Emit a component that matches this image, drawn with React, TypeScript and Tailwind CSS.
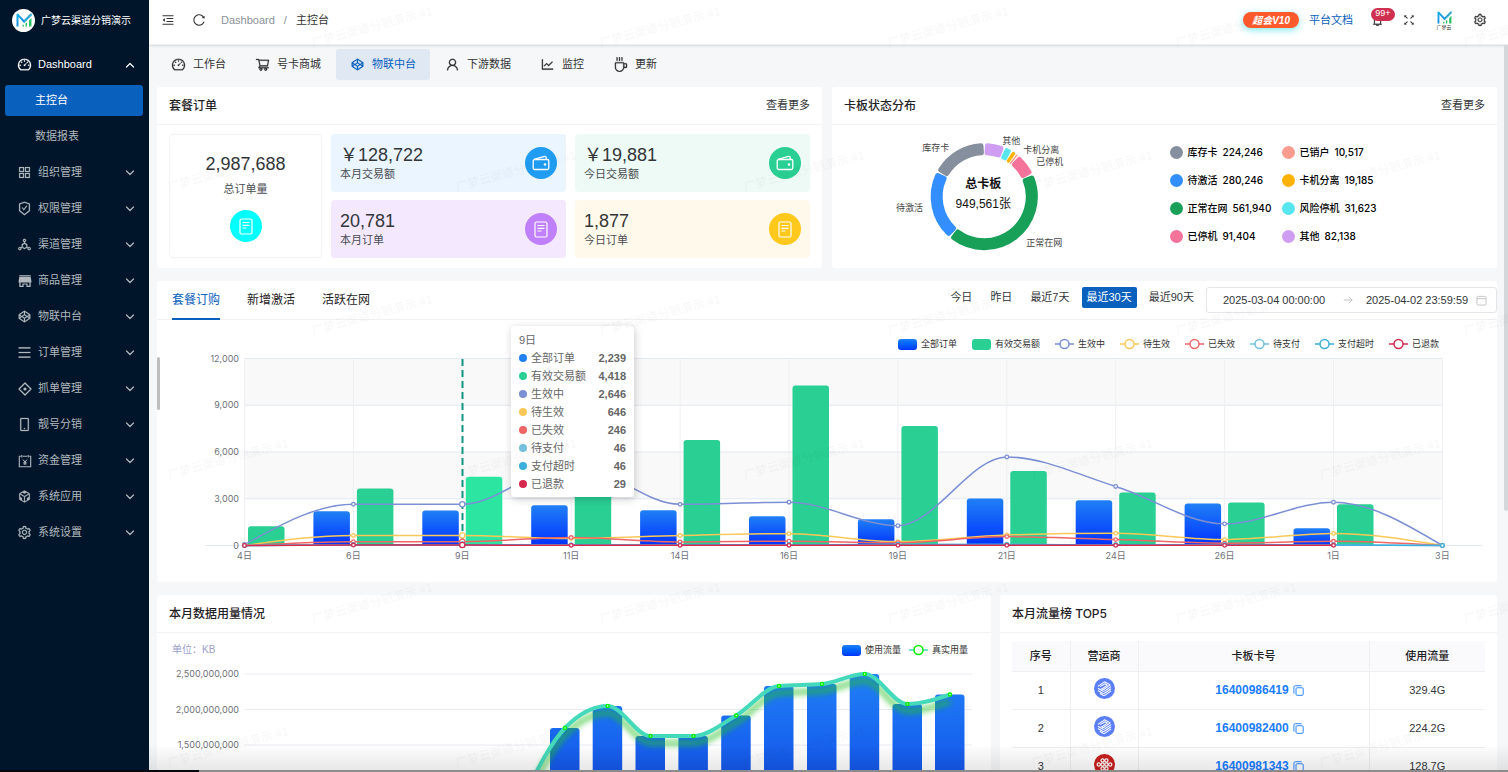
import { useId, type ReactNode } from "react";
import {
  AiOutlineAppstore,
  AiOutlineBell,
  AiOutlineCodeSandbox,
  AiOutlineCodepen,
  AiOutlineCoffee,
  AiOutlineDashboard,
  AiOutlineDeploymentUnit,
  AiOutlineFullscreen,
  AiOutlineLineChart,
  AiOutlineMenu,
  AiOutlineMenuFold,
  AiOutlineMobile,
  AiOutlineReload,
  AiOutlineSafetyCertificate,
  AiOutlineSetting,
  AiOutlineShoppingCart,
  AiOutlineUser,
} from "react-icons/ai";

type Point = [number, number];

/* ---------- icons ---------- */

function LogoMark({ className }: { className: string }) {
  const id = useId();
  return (
    <svg viewBox="0 0 32 28" className={className} aria-hidden="true">
      <defs>
        <linearGradient id={id} x1="0" y1="0" x2="1" y2="1">
          <stop offset="0" stopColor="#16b8f0" />
          <stop offset="1" stopColor="#1a5fd0" />
        </linearGradient>
      </defs>
      <path d="M1 27V2l3-1 12 13L29 1h2v4L16 20 5 8v19z" fill={`url(#${id})`} />
      <path d="M13 27v-4l3 1v3zM19 27v-6l3-2v8zM26 27V15l5-5v17z" fill="#2fc26b" />
      <path d="M16 16 31 1v4L16 20z" fill="#2fb8c8" />
    </svg>
  );
}

function Chevron({ up }: { up?: boolean }) {
  return (
    <svg viewBox="0 0 10 10" className="size-[10px]" fill="none" stroke="currentColor" strokeWidth="1.200" aria-hidden="true">
      <path d={up ? "M1.500 7 5 3.500 8.500 7" : "M1.500 3 5 6.500 8.500 3"} strokeLinecap="round" strokeLinejoin="round" />
    </svg>
  );
}

function ShopIcon() {
  return (
    <svg viewBox="0 0 14 14" className="size-[14px]" fill="currentColor" aria-hidden="true">
      <path d="M1.300 1h11.400v1.400H1.300z" opacity="0.800" />
      <path d="M1.300 2.800h11.400l.7 4.400v1.300H.6V7.200z" />
      <path d="M1.300 8h1.300v3.700h1.800V9.400h5.200v2.300h1.800V8h1.300v5H8.400v-2.400H5.600V13H1.300z" />
    </svg>
  );
}

function TargetIcon() {
  return (
    <svg viewBox="0 0 14 14" className="size-[14px]" fill="none" stroke="currentColor" strokeWidth="1.300" aria-hidden="true">
      <path d="M3.800 4.200 7 1l3.200 3.200M11 5l2 2-3.200 3.200M9 11l-2 2-3.200-3.200M3 9 1 7l2-2" strokeLinecap="round" strokeLinejoin="round" />
      <circle cx="7" cy="7" r="1.600" fill="currentColor" stroke="none" />
    </svg>
  );
}

function FundIcon() {
  return (
    <svg viewBox="0 0 14 14" className="size-[14px]" fill="none" stroke="currentColor" strokeWidth="1.100" aria-hidden="true">
      <path d="M2.800 2.300H1.300v10.400h11.400V2.300h-1.500M4.800 2.300h4.400M3.800 1v2.600M10.200 1v2.600" />
      <path d="M5 5.500 7 8l2-2.500M7 8v3M5.400 8.300h3.200M5.400 9.800h3.200" strokeWidth="1" />
    </svg>
  );
}

function CopyIcon() {
  return (
    <svg viewBox="0 0 12 12" className="size-[11px]" fill="none" stroke="currentColor" strokeWidth="1" aria-hidden="true">
      <rect x="3.300" y="3" width="7.800" height="8.300" rx="1.200" />
      <path d="M1 9V2.200Q1 .8 2.400.8H9" strokeLinecap="round" />
    </svg>
  );
}

function WalletIcon() {
  return (
    <svg viewBox="0 0 18 16" className="h-4 w-[18px]" fill="none" stroke="#fff" strokeWidth="1.300" strokeLinejoin="round" aria-hidden="true">
      <rect x="1.200" y="4.500" width="15.600" height="10" rx="1.500" />
      <path d="M2 4.300 12.500 1.400q1.500-.2 1.800 1.200v1.900" />
      <circle cx="13" cy="9.500" r="1.300" fill="#fff" stroke="none" />
    </svg>
  );
}

function OrderIcon() {
  return (
    <svg viewBox="0 0 14 17" className="h-[17px] w-[14px]" fill="none" stroke="#fff" strokeWidth="1.200" aria-hidden="true">
      <rect x="1" y="1" width="12" height="15" rx="1.500" />
      <path d="M3.500 4.500h7M3.500 7.300h7M3.500 10h4" />
    </svg>
  );
}

function ChinaMobile() {
  return (
    <svg viewBox="0 0 22 22" className="mx-auto size-[21px]" role="img" aria-label="中国移动">
      <circle cx="11" cy="11" r="11" fill="#5b7ffa" />
      <g fill="none" stroke="#fff" strokeWidth="1.100" strokeLinejoin="round" strokeLinecap="round">
        <path d="M4.500 8.500 11 4l6 3.200-6.500 4.600c-1 .6-1.800.3-3-.6" />
        <path d="M7 8.800 11.500 6l2.500 1.500-5 3.500" />
        <path d="M4.500 11 9 13.600c1 .6 1.800.3 2.800-.4L17.500 9.300" />
        <path d="M4.500 13.300 9 15.900c1 .5 1.800.3 2.800-.4l5.700-4" />
        <path d="M6.500 16.200 9.500 18c1 .5 1.800.2 2.600-.4l5.400-3.900" />
      </g>
    </svg>
  );
}

function ChinaUnicom() {
  return (
    <svg viewBox="0 0 22 22" className="mx-auto size-[21px]" role="img" aria-label="中国联通">
      <circle cx="11" cy="11" r="11" fill="#c8201e" />
      <g fill="none" stroke="#fff" strokeWidth="1.300">
        <circle cx="9" cy="6.800" r="1.700" />
        <circle cx="13" cy="6.800" r="1.700" />
        <circle cx="5" cy="11" r="1.700" />
        <circle cx="9" cy="11" r="1.700" />
        <circle cx="13" cy="11" r="1.700" />
        <circle cx="17" cy="11" r="1.700" />
        <circle cx="9" cy="15.200" r="1.700" />
        <circle cx="13" cy="15.200" r="1.700" />
      </g>
    </svg>
  );
}

/* ---------- chart helpers ---------- */

/* Monotone cubic interpolation, so curves never overshoot their points. */
function smoothPath(points: Point[]): string {
  const n = points.length;
  const h: number[] = [];
  const s: number[] = [];
  for (let i = 0; i < n - 1; i++) {
    h.push(points[i + 1][0] - points[i][0]);
    s.push((points[i + 1][1] - points[i][1]) / h[i]);
  }
  const m: number[] = new Array(n).fill(0);
  for (let i = 1; i < n - 1; i++) {
    const p = (s[i - 1] * h[i] + s[i] * h[i - 1]) / (h[i - 1] + h[i]);
    m[i] =
      (Math.sign(s[i - 1]) + Math.sign(s[i])) *
        Math.min(Math.abs(s[i - 1]), Math.abs(s[i]), 0.5 * Math.abs(p)) || 0;
  }
  m[0] = (3 * s[0] - m[1]) / 2;
  m[n - 1] = (3 * s[n - 2] - m[n - 2]) / 2;
  let d = `M${points[0][0]} ${points[0][1]}`;
  for (let i = 0; i < n - 1; i++) {
    const k = h[i] / 3;
    d += `C${points[i][0] + k} ${points[i][1] + k * m[i]} ${points[i + 1][0] - k} ${points[i + 1][1] - k * m[i + 1]} ${points[i + 1][0]} ${points[i + 1][1]}`;
  }
  return d;
}

function barPath(x: number, y: number, w: number, bottom: number, r: number): string {
  return `M${x} ${bottom}V${y + r}Q${x} ${y} ${x + r} ${y}H${x + w - r}Q${x + w} ${y} ${x + w} ${y + r}V${bottom}Z`;
}

function LineKey({ color, line = color }: { color: string; line?: string }) {
  return (
    <svg viewBox="0 0 19 12" className="h-3 w-[19px]" aria-hidden="true">
      <path d="M0 6h19" stroke={line} strokeWidth="1.500" />
      <circle cx="9.500" cy="6" r="4.500" fill="#fff" stroke={color} strokeWidth="1.500" />
    </svg>
  );
}

/* ---------- sidebar ---------- */

const menu: { label: string; icon: ReactNode }[] = [
  { label: "组织管理", icon: <AiOutlineAppstore className="stroke-16" /> },
  { label: "权限管理", icon: <AiOutlineSafetyCertificate className="stroke-16" /> },
  { label: "渠道管理", icon: <AiOutlineDeploymentUnit className="stroke-16" /> },
  { label: "商品管理", icon: <ShopIcon /> },
  { label: "物联中台", icon: <AiOutlineCodepen className="stroke-16" /> },
  { label: "订单管理", icon: <AiOutlineMenu className="stroke-16" /> },
  { label: "抓单管理", icon: <TargetIcon /> },
  { label: "靓号分销", icon: <AiOutlineMobile className="stroke-16" /> },
  { label: "资金管理", icon: <FundIcon /> },
  { label: "系统应用", icon: <AiOutlineCodeSandbox className="stroke-16" /> },
  { label: "系统设置", icon: <AiOutlineSetting className="stroke-16" /> },
];

function Sidebar() {
  return (
    <aside className="flex w-[149px] shrink-0 flex-col bg-[#001529] text-[#b2b8be]">
      <div className="flex h-10 items-center gap-[6px] pl-3">
        <span className="flex size-[23px] items-center justify-center rounded-full bg-white">
          <LogoMark className="h-[14px] w-4" />
        </span>
        <span className="text-[10px] whitespace-nowrap text-white">广梦云渠道分销演示</span>
      </div>
      <nav className="flex flex-col gap-[5px] pt-[9px] pr-[6px] pl-[5px]">
        <button type="button" className="flex h-[31px] items-center pr-2 pl-3 text-white">
          <AiOutlineDashboard className="size-[15px] stroke-16" />
          <span className="ml-[6px] flex-1 text-left">Dashboard</span>
          <Chevron up />
        </button>
        <a href="#console" className="flex h-[31px] items-center rounded-[3px] bg-[#0960bd] pl-[30px] text-white">
          主控台
        </a>
        <a href="#report" className="flex h-[31px] items-center pl-[30px]">
          数据报表
        </a>
        {menu.map((item) => (
          <button key={item.label} type="button" className="flex h-[31px] items-center pr-2 pl-3">
            <span className="flex w-[15px] justify-center text-[15px]">{item.icon}</span>
            <span className="ml-[6px] flex-1 text-left">{item.label}</span>
            <Chevron />
          </button>
        ))}
      </nav>
    </aside>
  );
}

/* ---------- top bar ---------- */

function TopBar() {
  return (
    <header className="flex h-[45px] shrink-0 items-center border-b border-[#eef0f2] bg-white pr-[21px] pb-1 pl-3 text-[#333] shadow-sm">
      <button type="button" aria-label="折叠菜单">
        <AiOutlineMenuFold className="size-[14px]" />
      </button>
      <button type="button" aria-label="刷新" className="ml-[17px]">
        <AiOutlineReload className="size-[14px]" />
      </button>
      <nav className="ml-[15px] flex items-center gap-[9px]">
        <a href="#dashboard" className="text-[#8a8f98]">Dashboard</a>
        <span className="text-[#8a8f98]">/</span>
        <span>主控台</span>
      </nav>
      <div className="ml-auto flex items-center">
        <a
          href="#vip"
          className="flex h-4 items-center rounded-full bg-[#ff5a2c] px-[9px] text-[10px] font-bold text-white italic shadow-[0_2px_7px_#7fe9ef]"
        >
          超会V10
        </a>
        <a href="#docs" className="ml-[10px] text-[#0960bd]">平台文档</a>
        <button type="button" aria-label="通知" className="relative ml-[18px]">
          <AiOutlineBell className="size-[13px] stroke-16" />
          <span className="absolute -top-[6px] left-0 flex h-[13px] w-6 items-center justify-center rounded-full bg-[#d03050] text-[9px] text-white">
            99+
          </span>
        </button>
        <button type="button" aria-label="全屏" className="ml-[18px]">
          <AiOutlineFullscreen className="size-[14px]" />
        </button>
        <button type="button" aria-label="用户" className="ml-5 flex w-4 flex-col items-center">
          <LogoMark className="h-[13px] w-[15px]" />
          <span className="text-[5px] leading-[6px]">广梦云</span>
        </button>
        <button type="button" aria-label="设置" className="ml-[21px]">
          <AiOutlineSetting className="size-[14px] stroke-16" />
        </button>
      </div>
    </header>
  );
}

const sections: { label: string; icon: ReactNode; active?: boolean }[] = [
  { label: "工作台", icon: <AiOutlineDashboard className="stroke-16" /> },
  { label: "号卡商城", icon: <AiOutlineShoppingCart className="stroke-16" /> },
  { label: "物联中台", icon: <AiOutlineCodepen className="stroke-16" />, active: true },
  { label: "下游数据", icon: <AiOutlineUser className="stroke-16" /> },
  { label: "监控", icon: <AiOutlineLineChart className="stroke-16" /> },
  { label: "更新", icon: <AiOutlineCoffee className="stroke-16" /> },
];

function SectionTabs() {
  return (
    <nav className="flex gap-[1px] pt-1 pb-[7px] text-[#333]">
      {sections.map((s) => (
        <button
          key={s.label}
          type="button"
          className={
            s.active
              ? "flex h-[31px] items-center gap-[7px] rounded-[3px] bg-[#dfe8f3] px-[14px] text-[#0960bd]"
              : "flex h-[31px] items-center gap-[7px] px-[14px]"
          }
        >
          <span className="text-[15px]">{s.icon}</span>
          {s.label}
        </button>
      ))}
    </nav>
  );
}

/* ---------- cards ---------- */

function CardHeader({ title, more }: { title: string; more?: boolean }) {
  return (
    <div className="flex h-[38px] items-center justify-between border-b border-[#f2f3f5] px-3">
      <h2 className="font-['Inter','Noto_Sans_CJK_SC',sans-serif] text-[12px] font-medium text-[#1f2225]">{title}</h2>
      {more && (
        <a href="#more" className="text-[#333639]">
          查看更多
        </a>
      )}
    </div>
  );
}

function StatTile({
  value,
  label,
  tile,
  badge,
  icon,
}: {
  value: string;
  label: string;
  tile: string;
  badge: string;
  icon: ReactNode;
}) {
  return (
    <div className={`flex h-[58px] items-center justify-between rounded-[4px] px-[9px] ${tile}`}>
      <div>
        <p className="text-[18px] leading-[22px] text-[#333639]">{value}</p>
        <p className="leading-[17px]">{label}</p>
      </div>
      <span className={`flex size-8 items-center justify-center rounded-full ${badge}`}>{icon}</span>
    </div>
  );
}

function OrdersCard() {
  return (
    <section className="rounded-[3px] bg-white">
      <CardHeader title="套餐订单" more />
      <div className="grid grid-cols-[153fr_235fr_235fr] gap-x-[9px] gap-y-2 px-3 pt-[9px] pb-2 text-[#4a4d52]">
        <div className="row-span-2 flex flex-col items-center rounded-[4px] border border-[#f3f3f5] pt-4">
          <p className="text-[18px] leading-[26px] text-[#333639]">2,987,688</p>
          <p className="mt-1 leading-[17px]">总订单量</p>
          <span className="mt-3 flex size-8 items-center justify-center rounded-full bg-[#00ffff]">
            <OrderIcon />
          </span>
        </div>
        <StatTile value="￥128,722" label="本月交易额" tile="bg-[#ebf5ff]" badge="bg-[#209cf2]" icon={<WalletIcon />} />
        <StatTile value="￥19,881" label="今日交易额" tile="bg-[#edfaf5]" badge="bg-[#29cf93]" icon={<WalletIcon />} />
        <StatTile value="20,781" label="本月订单" tile="bg-[#f4e8ff]" badge="bg-[#c080fc]" icon={<OrderIcon />} />
        <StatTile value="1,877" label="今日订单" tile="bg-[#fff9eb]" badge="bg-[#ffc81c]" icon={<OrderIcon />} />
      </div>
    </section>
  );
}

const slices = [
  { value: 82138, color: "#cf9df2" },
  { value: 31623, color: "#57e6ee" },
  { value: 19185, color: "#ffb300" },
  { value: 10517, color: "#f99b8f" },
  { value: 91404, color: "#f4739b" },
  { value: 561940, color: "#18a058" },
  { value: 280246, color: "#338fff" },
  { value: 224246, color: "#868f9d" },
];

function ringPath(cx: number, cy: number, r0: number, r1: number, a0: number, a1: number): string {
  const at = (r: number, a: number) => `${cx + r * Math.sin(a)} ${cy - r * Math.cos(a)}`;
  const large = a1 - a0 > Math.PI ? 1 : 0;
  return `M${at(r1, a0)}A${r1} ${r1} 0 ${large} 1 ${at(r1, a1)}L${at(r0, a1)}A${r0} ${r0} 0 ${large} 0 ${at(r0, a0)}Z`;
}

function Donut() {
  const total = slices.reduce((sum, s) => sum + s.value, 0);
  let angle = 0;
  return (
    <svg viewBox="0 0 332 143" className="w-1/2" role="img" aria-label="卡板状态分布图">
      {slices.map((s) => {
        const start = angle;
        const sweep = (s.value / total) * Math.PI * 2;
        angle += sweep;
        const corner = Math.min(2.5, sweep * 12);
        const pad = (corner + 0.5) / 47;
        return (
          <path
            key={s.color}
            d={ringPath(152, 71.500, 41.500 + corner, 53.500 - corner, start + pad, start + sweep - pad)}
            fill={s.color}
            stroke={s.color}
            strokeWidth={corner * 2}
            strokeLinejoin="round"
          />
        );
      })}
      <g fontSize="9" fill="#444">
        <text x="90" y="26">库存卡</text>
        <text x="170" y="19">其他</text>
        <text x="191" y="28">卡机分离</text>
        <text x="204" y="40">已停机</text>
        <text x="64" y="86">待激活</text>
        <text x="194" y="121">正常在网</text>
      </g>
      <g fontSize="12" textAnchor="middle" fill="#111">
        <text x="151" y="63" fontWeight="bold">总卡板</text>
        <text x="151" y="83">949,561张</text>
      </g>
    </svg>
  );
}

const statuses = [
  { label: "库存卡", value: "224,246", dot: "bg-[#868f9d]" },
  { label: "已销户", value: "10,517", dot: "bg-[#f99b8f]" },
  { label: "待激活", value: "280,246", dot: "bg-[#338fff]" },
  { label: "卡机分离", value: "19,185", dot: "bg-[#ffb300]" },
  { label: "正常在网", value: "561,940", dot: "bg-[#18a058]" },
  { label: "风险停机", value: "31,623", dot: "bg-[#57e6ee]" },
  { label: "已停机", value: "91,404", dot: "bg-[#f4739b]" },
  { label: "其他", value: "82,138", dot: "bg-[#cf9df2]" },
];

function StatusCard() {
  return (
    <section className="rounded-[3px] bg-white">
      <CardHeader title="卡板状态分布" more />
      <div className="flex">
        <Donut />
        <ul className="ml-[5px] grid grid-cols-[112px_112px] content-start pt-[13px] font-['Inter','Noto_Sans_CJK_SC',sans-serif] text-[10px] font-medium text-black">
          {statuses.map((s) => (
            <li key={s.label} className="flex h-7 items-center whitespace-nowrap">
              <span className={`mr-[5px] size-[13px] rounded-full ${s.dot}`} />
              {s.label}
              <span className="ml-[5px]">{s.value}</span>
            </li>
          ))}
        </ul>
      </div>
    </section>
  );
}

/* ---------- order trend ---------- */

const days = ["4日", "6日", "9日", "11日", "14日", "16日", "19日", "21日", "24日", "26日", "1日", "3日"];
const orders = [0, 2190, 2239, 2590, 2270, 1880, 1690, 3010, 2900, 2690, 1110, 0];
const revenue = [1240, 3650, 4418, 4800, 6770, 10270, 7670, 4780, 3400, 2760, 2640, 0];

const lines: { label: string; color: string; values: number[] }[] = [
  { label: "生效中", color: "#7b8fd4", values: [60, 2646, 2646, 5230, 2640, 2780, 1270, 5680, 3790, 1390, 2780, 0] },
  { label: "待生效", color: "#fac858", values: [0, 646, 646, 450, 640, 760, 250, 680, 780, 380, 770, 0] },
  { label: "已失效", color: "#ee6666", values: [0, 246, 246, 510, 230, 280, 180, 570, 380, 150, 270, 0] },
  { label: "待支付", color: "#73c0de", values: [0, 46, 46, 40, 40, 50, 60, 60, 50, 50, 40, 0] },
  { label: "支付超时", color: "#3baedb", values: [0, 46, 46, 40, 40, 50, 60, 60, 50, 50, 40, 0] },
  { label: "已退款", color: "#d5294d", values: [0, 29, 29, 10, 10, 10, 10, 10, 10, 10, 10] },
];

const tickX = (i: number) => 87.5 + i * 108.9;
const valueY = (v: number) => 195.5 - (v / 12000) * 187;

function TrendChart() {
  return (
    <svg viewBox="0 0 1340 232" className="block w-full font-['Inter','Noto_Sans_CJK_SC',sans-serif]" role="img" aria-label="套餐订购趋势">
      <defs>
        <linearGradient id="order-fill" x1="0" y1="0" x2="0" y2="1">
          <stop offset="0" stopColor="#2080f5" />
          <stop offset="1" stopColor="#0032ff" />
        </linearGradient>
      </defs>
      <path d="M87.500 8.500H1285.500v46.750H87.500zM87.500 102H1285.500v46.750H87.500z" fill="#f9f9f9" />
      {[0, 3000, 6000, 9000, 12000].map((v) => (
        <g key={v}>
          <path d={`M${v ? 87.5 : 48} ${valueY(v)}H${v ? 1285.5 : 1325}`} stroke="#e3e8f2" />
          <text x="82" y={valueY(v) + 3} textAnchor="end" fontSize="9" fill="#6e7079">
            {v.toLocaleString("en-US")}
          </text>
        </g>
      ))}
      {days.map((d, i) => (
        <g key={d}>
          <path d={`M${tickX(i)} 8.500V195.500`} stroke="#eeeff2" />
          <text x={tickX(i)} y="209" textAnchor="middle" fontSize="9" fill="#6e7079">
            {d}
          </text>
        </g>
      ))}
      {orders.map((v, i) =>
        v ? <path key={days[i]} d={barPath(tickX(i) - 40, valueY(v), 36.5, 195.5, 3)} fill="url(#order-fill)" /> : null,
      )}
      {revenue.map((v, i) =>
        v ? (
          <path
            key={days[i]}
            d={barPath(tickX(i) + 3.5, valueY(v), 36.5, 195.5, 3)}
            fill={i === 2 ? "#2ce5a0" : "#29cf93"}
          />
        ) : null,
      )}
      <path d="M305.500 9V195" stroke="#129584" strokeWidth="2" strokeDasharray="7 4" />
      {lines.map((l) => {
        const points = l.values.map((v, i): Point => [tickX(i), valueY(v)]);
        return (
          <g key={l.label} fill="none" stroke={l.color}>
            <path d={smoothPath(points)} strokeWidth="1.500" />
            {points.map(([x, y], i) => (
              <circle key={days[i]} cx={x} cy={y} r={i === 2 ? 2.6 : 1.8} fill="#fff" strokeWidth="1.300" />
            ))}
          </g>
        );
      })}
    </svg>
  );
}

const tooltipRows = [
  { label: "全部订单", value: "2,239", dot: "bg-[#2080f5]" },
  { label: "有效交易额", value: "4,418", dot: "bg-[#29cf93]" },
  { label: "生效中", value: "2,646", dot: "bg-[#7b8fd4]" },
  { label: "待生效", value: "646", dot: "bg-[#fac858]" },
  { label: "已失效", value: "246", dot: "bg-[#ee6666]" },
  { label: "待支付", value: "46", dot: "bg-[#73c0de]" },
  { label: "支付超时", value: "46", dot: "bg-[#3baedb]" },
  { label: "已退款", value: "29", dot: "bg-[#d5294d]" },
];

function TrendCard() {
  return (
    <section className="relative rounded-[3px] bg-white">
      <div className="flex h-[39px] justify-between border-b border-[#f0f1f4] pl-[15px]">
        <div role="tablist" className="flex gap-[27px] text-[12px] text-[#1f2225]">
          <button type="button" role="tab" aria-selected="true" className="h-[39px] border-b-2 border-[#0960bd] text-[#0960bd]">
            套餐订购
          </button>
          <button type="button" role="tab" aria-selected="false" className="h-[39px] border-b-2 border-transparent">
            新增激活
          </button>
          <button type="button" role="tab" aria-selected="false" className="h-[39px] border-b-2 border-transparent">
            活跃在网
          </button>
        </div>
        <div className="flex items-start gap-[6px] pt-[6px] text-[#333639]">
          <button type="button" className="h-[21px] px-[6px]">今日</button>
          <button type="button" className="h-[21px] px-[6px]">昨日</button>
          <button type="button" className="h-[21px] px-[6px]">最近7天</button>
          <button type="button" className="h-[21px] rounded-[2px] bg-[#0960bd] px-[5px] text-white">最近30天</button>
          <button type="button" className="h-[21px] px-[6px]">最近90天</button>
          <div className="flex h-[26px] w-[291px] items-center rounded-[3px] border border-[#e6e6ea] pr-[9px] pl-4">
            <input aria-label="开始时间" defaultValue="2025-03-04 00:00:00" className="w-[107px] min-w-0 bg-transparent outline-none" />
            <svg viewBox="0 0 12 12" className="mx-[13px] size-[10px] text-[#b5b5b5]" fill="none" stroke="currentColor" aria-hidden="true">
              <path d="M1 6h10M7 2l4 4-4 4" />
            </svg>
            <input aria-label="结束时间" defaultValue="2025-04-02 23:59:59" className="w-[107px] min-w-0 bg-transparent outline-none" />
            <svg viewBox="0 0 12 12" className="ml-auto size-[11px] text-[#c2c2c2]" fill="none" stroke="currentColor" aria-hidden="true">
              <rect x="1" y="1.500" width="10" height="9.500" rx="1.500" />
              <path d="M1 4h10" />
            </svg>
          </div>
        </div>
      </div>
      <ul className="flex h-[30px] items-end justify-end gap-[15px] pr-[58px] text-[9px] leading-3 text-[#333]">
        <li className="flex items-center gap-1">
          <span className="h-[11px] w-[19px] rounded-[3px] bg-linear-to-b from-[#2080f5] to-[#0032ff]" />
          全部订单
        </li>
        <li className="flex items-center gap-1">
          <span className="h-[11px] w-[19px] rounded-[3px] bg-[#29cf93]" />
          有效交易额
        </li>
        {lines.map((l) => (
          <li key={l.label} className="flex items-center gap-1">
            <LineKey color={l.color} />
            {l.label}
          </li>
        ))}
      </ul>
      <TrendChart />
      <div className="absolute top-[76px] left-0 h-[53px] w-[3px] rounded-full bg-[#bdbdbd]" />
      <div className="absolute top-[45px] left-[354px] w-[123px] rounded-[3px] bg-white px-2 pt-[5px] pb-1 leading-[18px] text-[#666] shadow-[1px_2px_8px_rgba(0,0,0,0.2)]">
        <p>9日</p>
        <ul>
          {tooltipRows.map((r) => (
            <li key={r.label} className="flex items-center">
              <span className={`mr-1 size-2 rounded-full ${r.dot}`} />
              {r.label}
              <span className="ml-auto font-bold">{r.value}</span>
            </li>
          ))}
        </ul>
      </div>
    </section>
  );
}

/* ---------- monthly usage ---------- */

const usage: Point[] = [
  [365, 142],
  [408, 70],
  [450.7, 48],
  [493.5, 78],
  [536.4, 78],
  [579.2, 57.5],
  [622, 28],
  [665, 26],
  [707.7, 16],
  [750.5, 46],
  [793, 36.5],
];

function UsageChart() {
  return (
    <svg viewBox="0 0 834 160" className="block w-full font-['Inter','Noto_Sans_CJK_SC',sans-serif]" role="img" aria-label="本月数据用量">
      <defs>
        <linearGradient id="usage-fill" gradientUnits="userSpaceOnUse" x1="0" y1="16" x2="0" y2="160">
          <stop offset="0" stopColor="#2080f5" />
          <stop offset="1" stopColor="#0f45e8" />
        </linearGradient>
        <filter id="usage-glow" x="-10%" y="-30%" width="120%" height="160%">
          <feGaussianBlur stdDeviation="2.500" />
        </filter>
      </defs>
      {["2,500,000,000", "2,000,000,000", "1,500,000,000"].map((label, i) => (
        <g key={label}>
          <path d={`M87.500 ${16 + i * 35.5}H815`} stroke="#e8ebf3" />
          <text x="82" y={19 + i * 35.5} textAnchor="end" fontSize="9" fill="#6e7079">
            {label}
          </text>
        </g>
      ))}
      {usage.slice(1).map(([x, y]) => (
        <path key={x} d={barPath(x - 15, y, 29.5, 160, 3)} fill="url(#usage-fill)" />
      ))}
      <path
        d={smoothPath(usage)}
        transform="translate(0 7)"
        fill="none"
        stroke="#20c020"
        strokeOpacity="0.500"
        strokeWidth="7"
        filter="url(#usage-glow)"
      />
      <path d={smoothPath(usage)} fill="none" stroke="#45d9bb" strokeWidth="4" />
      {usage.slice(1).map(([x, y]) => (
        <circle key={x} cx={x} cy={y} r="1.500" fill="#fff" stroke="#00f000" strokeWidth="1.500" />
      ))}
    </svg>
  );
}

function UsageCard() {
  return (
    <section className="rounded-t-[3px] bg-white">
      <CardHeader title="本月数据用量情况" />
      <div className="flex h-[25px] items-end justify-between pr-[23px] pb-[2px] pl-[15px] text-[9px] leading-3">
        <span className="text-[10px] text-[#9a9fcb]">单位：KB</span>
        <ul className="flex gap-2 text-[#333]">
          <li className="flex items-center gap-1">
            <span className="h-[11px] w-[19px] rounded-[3px] bg-linear-to-b from-[#2080f5] to-[#0032ff]" />
            使用流量
          </li>
          <li className="flex items-center gap-1">
            <LineKey color="#00f000" line="#45d9bb" />
            真实用量
          </li>
        </ul>
      </div>
      <UsageChart />
    </section>
  );
}

const ranking = [
  { rank: 1, logo: <ChinaMobile />, card: "16400986419", usage: "329.4G" },
  { rank: 2, logo: <ChinaMobile />, card: "16400982400", usage: "224.2G" },
  { rank: 3, logo: <ChinaUnicom />, card: "16400981343", usage: "128.7G" },
];

function RankingCard() {
  return (
    <section className="rounded-t-[3px] bg-white">
      <CardHeader title="本月流量榜 TOP5" />
      <div className="px-3 pt-2">
        <table className="w-full table-fixed border-collapse text-center text-[#333639]">
          <colgroup>
            <col className="w-[58px]" />
            <col className="w-[68px]" />
            <col />
            <col className="w-[116px]" />
          </colgroup>
          <thead>
            <tr className="h-[30px] border-b border-[#efeff2] bg-[#fafafc] text-[#1f2225]">
              <th className="border-r border-[#efeff2] font-medium">序号</th>
              <th className="border-r border-[#efeff2] font-medium">营运商</th>
              <th className="border-r border-[#efeff2] font-medium">卡板卡号</th>
              <th className="font-medium">使用流量</th>
            </tr>
          </thead>
          <tbody>
            {ranking.map((r) => (
              <tr key={r.rank} className="h-[38px] border-b border-[#efeff2]">
                <td className="border-r border-[#efeff2]">{r.rank}</td>
                <td className="border-r border-[#efeff2] pb-1">{r.logo}</td>
                <td className="border-r border-[#efeff2] pl-3">
                  <span className="inline-flex items-center gap-1 text-[12px] font-bold text-[#1a7dff]">
                    <a href="#card">{r.card}</a>
                    <button type="button" aria-label="复制卡号">
                      <CopyIcon />
                    </button>
                  </span>
                </td>
                <td>{r.usage}</td>
              </tr>
            ))}
          </tbody>
        </table>
      </div>
    </section>
  );
}

/* ---------- page ---------- */

function Watermark() {
  return (
    <svg className="pointer-events-none absolute inset-0 size-full" aria-hidden="true">
      <defs>
        <pattern id="watermark" width="288" height="288" patternUnits="userSpaceOnUse">
          <g fill="#000" fillOpacity="0.030" fontSize="12">
            <text transform="translate(164 47) rotate(-15)">广梦云渠道分销演示 #1</text>
            <text transform="translate(20 191) rotate(-15)">广梦云渠道分销演示 #1</text>
          </g>
        </pattern>
      </defs>
      <rect width="100%" height="100%" fill="url(#watermark)" />
    </svg>
  );
}

export default function App() {
  return (
    <div className="flex h-screen overflow-hidden bg-[#f5f7f9] font-['Liberation_Sans','Noto_Sans_CJK_SC',sans-serif] text-[11px]">
      <Sidebar />
      <div className="relative flex min-w-0 flex-1 flex-col overflow-hidden">
        <TopBar />
        <main className="flex-1 overflow-hidden pr-[11px] pl-2">
          <SectionTabs />
          <div className="flex flex-col gap-[13px]">
            <div className="grid grid-cols-2 gap-[10px]">
              <OrdersCard />
              <StatusCard />
            </div>
            <TrendCard />
            <div className="grid grid-cols-[834fr_497fr] gap-[9px]">
              <UsageCard />
              <RankingCard />
            </div>
          </div>
        </main>
        <div className="absolute top-[45px] right-0 h-[466px] w-1 rounded-b-full bg-[#d5d8da]" />
        <Watermark />
        <div className="pointer-events-none absolute inset-x-0 bottom-0 h-7 bg-linear-to-b from-transparent to-black/10" />
      </div>
      <div className="fixed inset-x-0 bottom-0 flex h-[2px] bg-[#8c8c8c]">
        <div className="w-[199px] bg-[#05080c]" />
      </div>
    </div>
  );
}
